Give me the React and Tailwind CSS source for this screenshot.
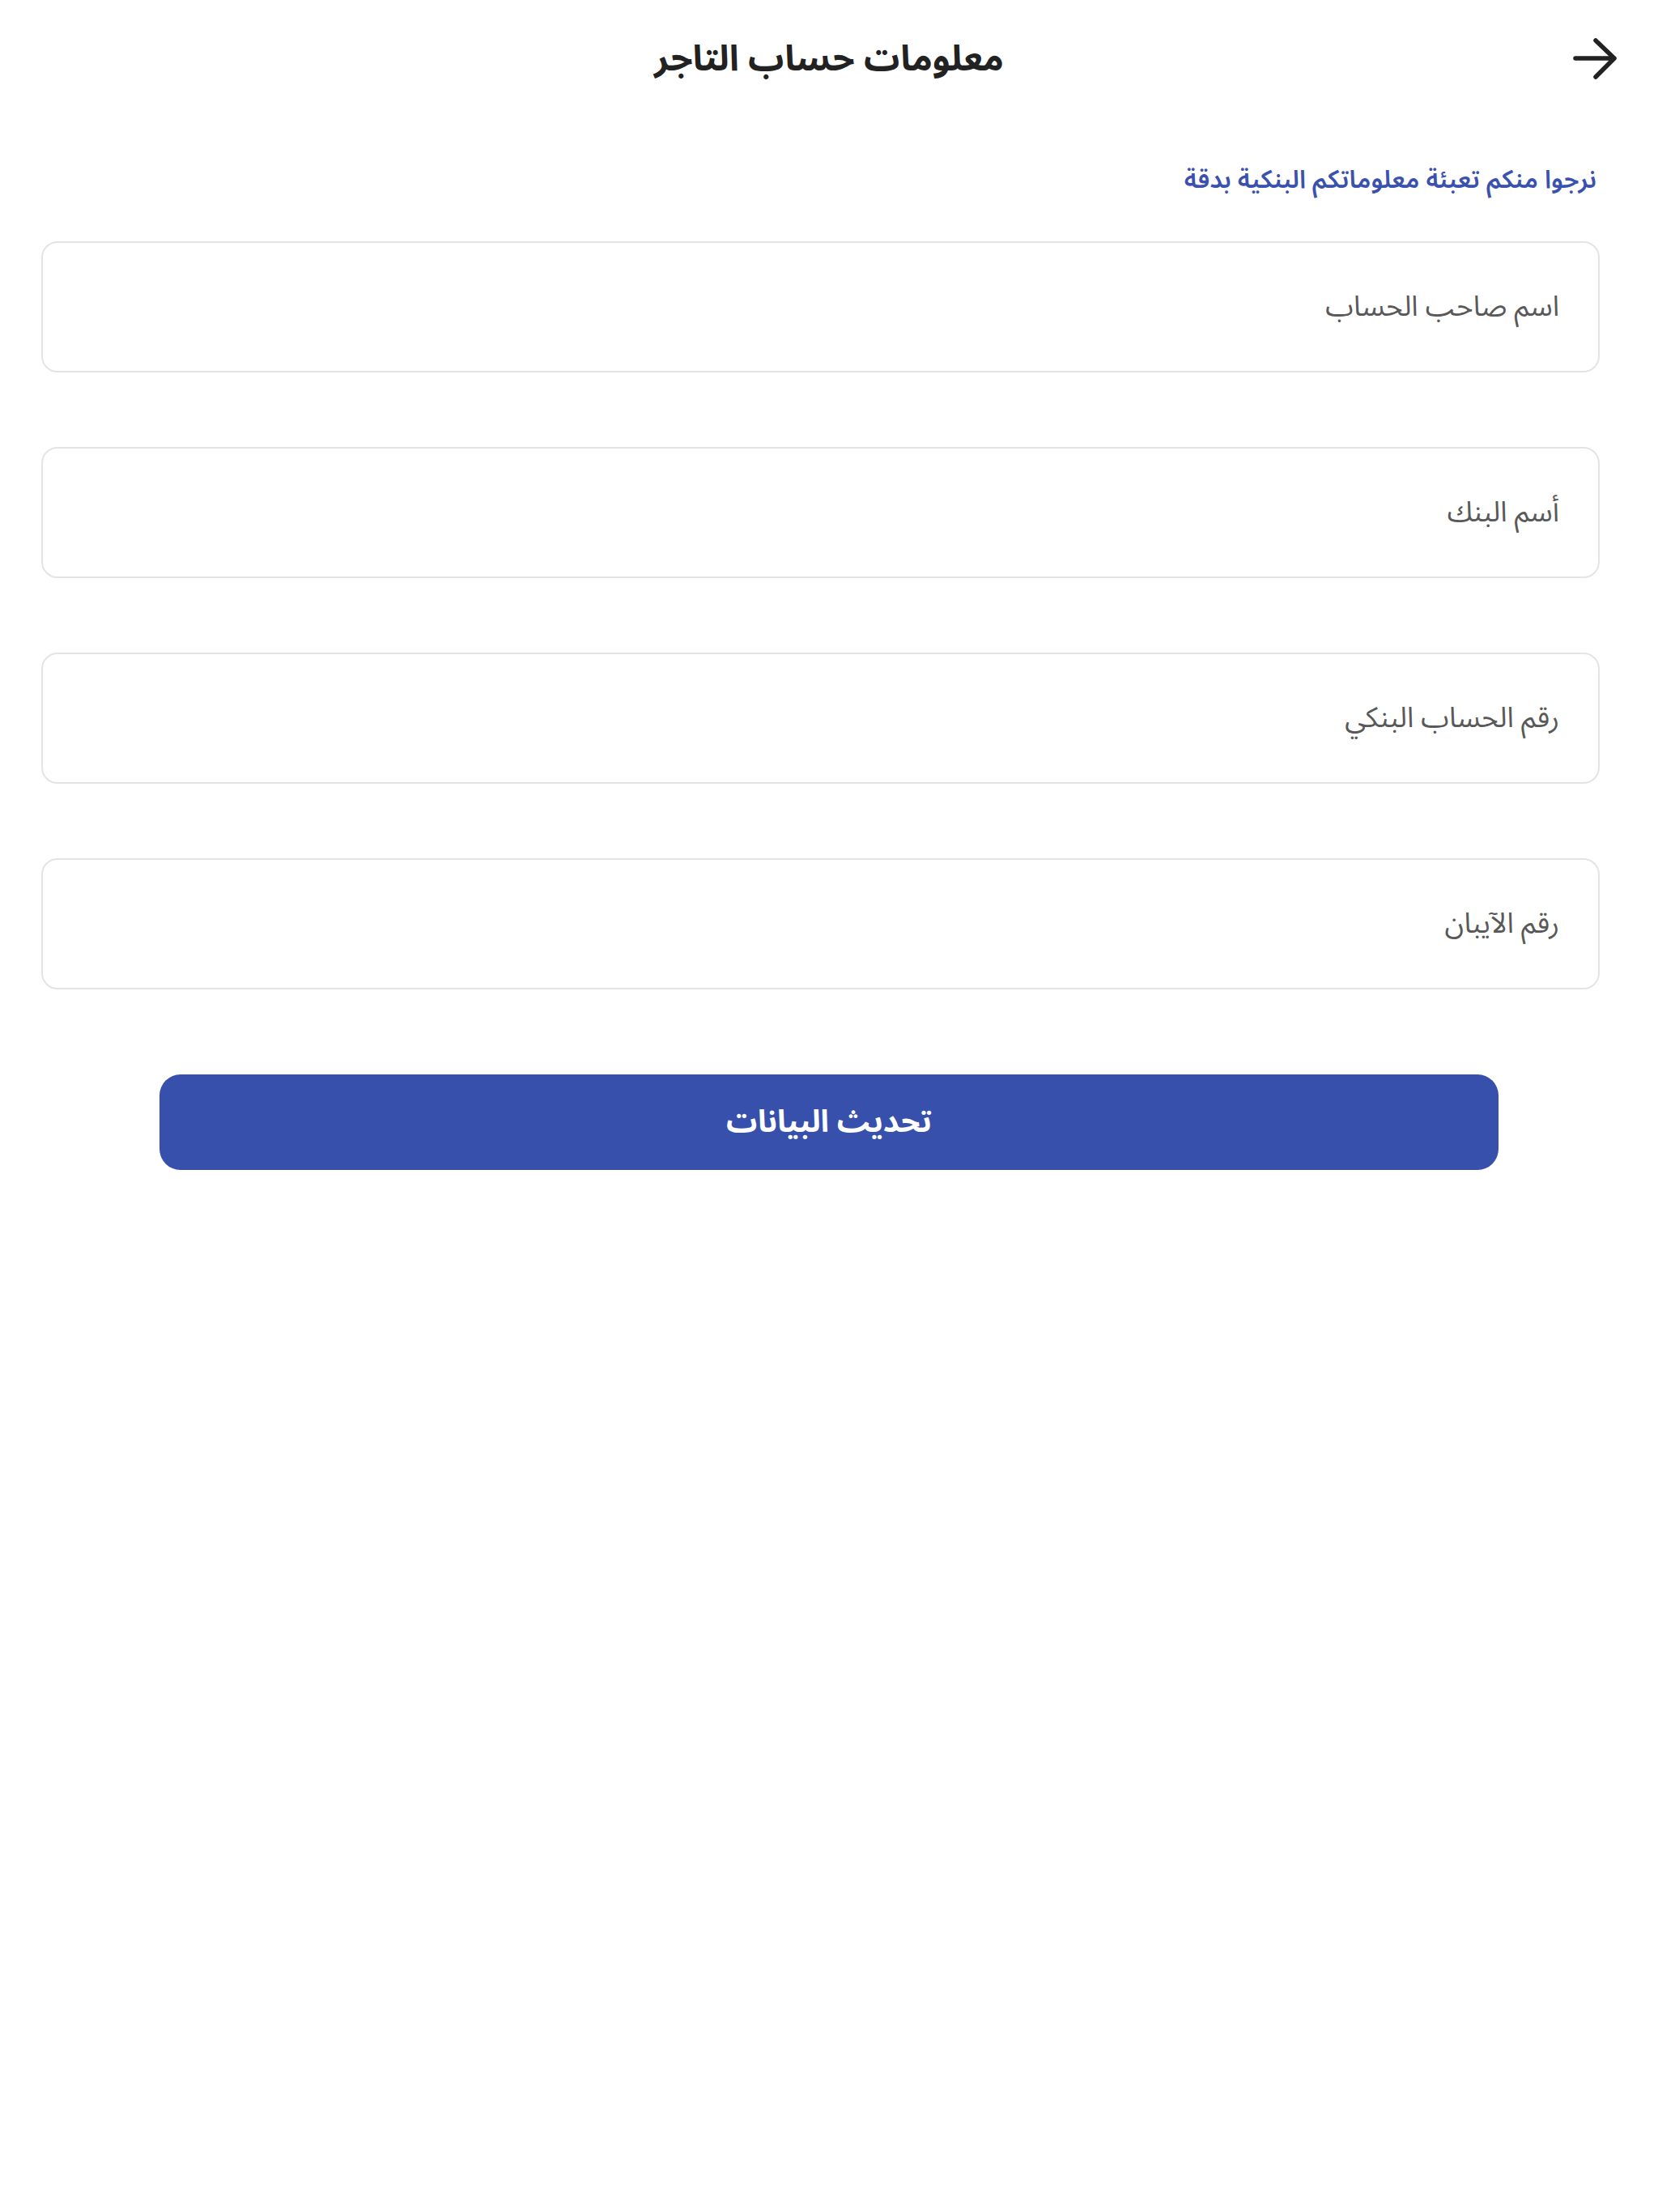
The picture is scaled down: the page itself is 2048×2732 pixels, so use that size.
import React, { useState } from "react";

const fields = [
  { key: "holder", label: "اسم صاحب الحساب" },
  { key: "bank", label: "أسم البنك" },
  { key: "account", label: "رقم الحساب البنكي" },
  { key: "iban", label: "رقم الآيبان" },
];

const BackArrow = () => (
  <svg width="54" height="52" viewBox="0 0 54 52" fill="none">
    <path
      d="M3 25H51M28 3L51 25L28 48"
      stroke="#222222"
      strokeWidth="5.5"
      strokeLinecap="round"
      strokeLinejoin="round"
    />
  </svg>
);

export default function App() {
  const [values, setValues] = useState({});

  return (
    <div
      dir="rtl"
      className="bg-white w-[2048px] min-h-[2732px] font-['Noto_Sans_Arabic','DejaVu_Sans',sans-serif]"
    >
      <div className="grid grid-cols-[1fr_auto_1fr] items-center h-[146px] px-[51px]">
        <button className="justify-self-start flex items-center">
          <BackArrow />
        </button>
        <h1 className="text-[44px] font-bold text-[#222222] leading-none">
          معلومات حساب التاجر
        </h1>
        <div />
      </div>

      <div className="flex flex-col pl-[51px] pr-[72px]">
        <p className="mt-[52px] pr-[4px] text-[31px] leading-[48px] font-semibold text-[#3a52ad]">
          نرجوا منكم تعبئة معلوماتكم البنكية بدقة
        </p>

        <div className="mt-[52px] flex flex-col gap-[92px]">
          {fields.map((f) => (
            <input
              key={f.key}
              value={values[f.key] || ""}
              onChange={(e) => setValues({ ...values, [f.key]: e.target.value })}
              placeholder={f.label}
              className="h-[162px] w-full rounded-[20px] border-2 border-[#e4e4e4] bg-white px-[48px] text-[35px] text-[#333] placeholder:text-[#595959] outline-none"
            />
          ))}
        </div>
      </div>

      <div className="flex justify-center mt-[105px]">
        <button className="w-[1654px] h-[118px] rounded-[26px] bg-[#3650ac] text-white text-[38px] font-bold">
          تحديث البيانات
        </button>
      </div>
    </div>
  );
}
